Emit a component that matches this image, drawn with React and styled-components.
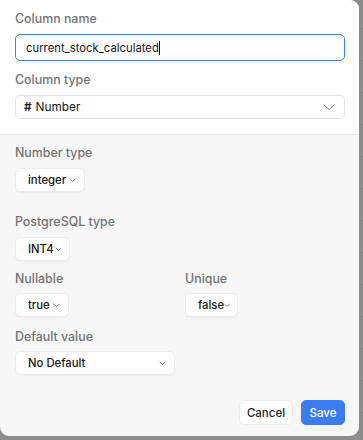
import React from "react";
import styled, { createGlobalStyle } from "styled-components";

const Global = createGlobalStyle`
  html, body { margin: 0; padding: 0; }
  body {
    width: 363px; height: 440px; overflow: hidden;
    font-family: Inter, "Noto Sans", sans-serif;
    -webkit-font-smoothing: antialiased;
  }
`;

const Backdrop = styled.div`
  width: 363px;
  height: 440px;
  background-color: #8d8d8d;
  background-image: linear-gradient(to bottom, #808080 1px, transparent 1px);
  background-size: 100% 32px;
  background-position: 0 28px;
  position: relative;
  overflow: hidden;
`;

const Panel = styled.div`
  width: 359px;
  height: 436px;
  background: #f7f7f7;
  border-radius: 0 9px 9px 9px;
  overflow: hidden;
  display: flex;
  flex-direction: column;
  box-sizing: border-box;
`;

const TopSection = styled.div`
  background: #ffffff;
  padding: 10px 14px 15px 15px;
  border-bottom: 1px solid #e6e6e6;
  display: flex;
  flex-direction: column;
`;

const BottomSection = styled.div`
  flex: 1;
  padding: 9px 14px 11px 15px;
  display: flex;
  flex-direction: column;
`;

const Label = styled.div`
  font-size: 12.4px;
  font-weight: 500;
  color: #737373;
  line-height: 18px;
  margin-top: ${(p) => p.$mt || 0}px;
  margin-bottom: ${(p) => p.$mb ?? 6}px;
`;

const TextInput = styled.div`
  height: 27px;
  box-sizing: border-box;
  border: 1px solid #3b7ff0;
  border-radius: 5px;
  display: flex;
  align-items: center;
  padding-left: 10px;
  font-size: 11.3px;
  color: #171717;
`;

const Caret = styled.span`
  display: inline-block;
  width: 1px;
  height: 14px;
  background: #111;
`;

const Select = styled.div`
  height: 24px;
  box-sizing: border-box;
  border: 1px solid #e3e3e3;
  border-radius: 5px;
  display: flex;
  align-items: center;
  justify-content: space-between;
  padding: 0 9px 0 8px;
  font-size: 11.8px;
  color: #171717;
  background: #fff;
`;

const Hash = styled.span`
  font-weight: 600;
  margin-right: 4px;
`;

const Pill = styled.div`
  height: 24px;
  width: ${(p) => p.$w}px;
  box-sizing: border-box;
  background: #fff;
  border: 1px solid #ececec;
  border-radius: 5px;
  box-shadow: 0 1px 1px rgba(0, 0, 0, 0.04);
  display: flex;
  align-items: center;
  justify-content: space-between;
  padding: 0 ${(p) => p.$pr ?? 8}px 0 ${(p) => p.$pl ?? 12}px;
  font-size: 11.3px;
  font-weight: 500;
  color: #171717;
`;

const Row = styled.div`
  display: grid;
  grid-template-columns: 170px 1fr;
  margin-top: 9px;
`;

const Field = styled.div`
  display: flex;
  flex-direction: column;
  align-items: flex-start;
`;

const Footer = styled.div`
  margin-top: auto;
  display: flex;
  justify-content: flex-end;
  gap: 8px;
`;

const Button = styled.div`
  height: 25px;
  width: ${(p) => p.$w}px;
  box-sizing: border-box;
  border-radius: 5px;
  display: flex;
  align-items: center;
  justify-content: center;
  font-size: 11.5px;
  font-weight: 500;
  background: ${(p) => (p.$primary ? "#3b7cf0" : "#fff")};
  color: ${(p) => (p.$primary ? "#fff" : "#262626")};
  border: 1px solid ${(p) => (p.$primary ? "#3b7cf0" : "#ececec")};
`;

const Chevron = () => (
  <svg width="12" height="12" viewBox="0 0 12 12" fill="none">
    <path d="M1 4 L6 8.5 L11 4" stroke="#8a8a8a" strokeWidth="1" strokeLinecap="round" strokeLinejoin="round" />
  </svg>
);

const SmallChevron = () => (
  <svg width="7" height="5" viewBox="0 0 7 5" fill="none">
    <path d="M1 1.3 L3.5 3.5 L6 1.3" stroke="#6b6b6b" strokeWidth="1" strokeLinecap="round" strokeLinejoin="round" />
  </svg>
);

export default function App() {
  return (
    <>
      <Global />
      <Backdrop>
        <Panel>
          <TopSection>
            <Label>Column name</Label>
            <TextInput>
              current_stock_calculated
              <Caret />
            </TextInput>
            <Label $mt={10} $mb={6}>Column type</Label>
            <Select>
              <span>
                <Hash>#</Hash>Number
              </span>
              <Chevron />
            </Select>
          </TopSection>
          <BottomSection>
            <Label $mb={6}>Number type</Label>
            <Field>
              <Pill $w={70}>
                integer <SmallChevron />
              </Pill>
            </Field>
            <Label $mt={21} $mb={6}>PostgreSQL type</Label>
            <Field>
              <Pill $w={55} $pr={7}>
                INT4 <SmallChevron />
              </Pill>
            </Field>
            <Row>
              <Field>
                <Label $mb={5}>Nullable</Label>
                <Pill $w={54}>
                  true <SmallChevron />
                </Pill>
              </Field>
              <Field>
                <Label $mb={5}>Unique</Label>
                <Pill $w={53} $pr={7}>
                  false<SmallChevron />
                </Pill>
              </Field>
            </Row>
            <Label $mt={11} $mb={5}>Default value</Label>
            <Field>
              <Pill $w={160}>
                No Default <SmallChevron />
              </Pill>
            </Field>
            <Footer>
              <Button $w={54}>Cancel</Button>
              <Button $w={44} $primary>Save</Button>
            </Footer>
          </BottomSection>
        </Panel>
      </Backdrop>
    </>
  );
}
